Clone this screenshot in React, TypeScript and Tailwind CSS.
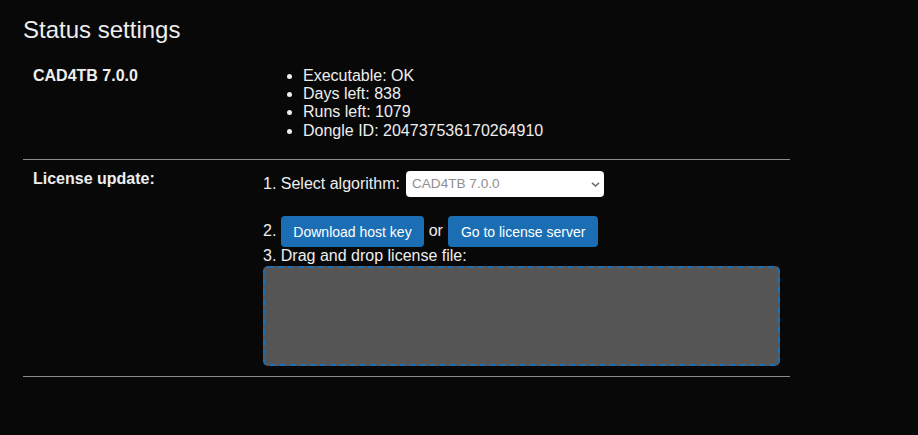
const statusItems = [
  'Executable: OK',
  'Days left: 838',
  'Runs left: 1079',
  'Dongle ID: 204737536170264910',
];

export default function App() {
  return (
    <div className="min-h-screen bg-[#080808] px-[23px] font-['Liberation_Sans',Arial,sans-serif] text-[16px] leading-[1.15] text-[#eeeeee]">
      <h1 className="pt-[16px] text-[24px] leading-[1.15]">Status settings</h1>

      <div className="w-[767px]">
        {/* status row */}
        <div className="flex border-b border-[#8c8c8c] pt-[23px] pb-[19px]">
          <div className="w-[230px] pl-[10px] font-bold">CAD4TB 7.0.0</div>
          <ul className="list-disc pl-[50px]">
            {statusItems.map((item) => (
              <li key={item}>{item}</li>
            ))}
          </ul>
        </div>

        {/* license row */}
        <div className="flex border-b border-[#8c8c8c]">
          <div className="w-[230px] pt-[10px] pl-[10px] font-bold">License update:</div>
          <div className="w-[537px] px-[10px] pt-[11px] pb-[10px]">
            <div className="flex h-[26px] items-center gap-[6px]">
              <span>1. Select algorithm:</span>
              <div className="relative">
                <select className="h-[26px] w-[198px] appearance-none rounded-[4px] bg-white pl-[6px] text-[13.6px] text-[#8f8f8f]">
                  <option>CAD4TB 7.0.0</option>
                </select>
                <svg
                  className="pointer-events-none absolute right-[4px] top-[11px] h-[5px] w-[9px]"
                  viewBox="0 0 9 5"
                  fill="none"
                >
                  <path d="M1 0.8 L4.5 4 L8 0.8" stroke="#707070" strokeWidth="1.6" />
                </svg>
              </div>
            </div>

            <div className="mt-[19px] flex h-[31px] items-center gap-[5px]">
              <span>2.</span>
              <button className="h-[31px] rounded-[4px] bg-[#1b6eb3] px-[12px] text-[14px] text-white">
                Download host key
              </button>
              <span>or</span>
              <button className="h-[31px] rounded-[4px] bg-[#1b6eb3] px-[13px] text-[14px] text-white">
                Go to license server
              </button>
            </div>

            <div>3. Drag and drop license file:</div>
            <div className="h-[100px] w-[517px] rounded-[5px] border-2 border-dashed border-[#1d6fb3] bg-[#555555]" />
          </div>
        </div>
      </div>
    </div>
  );
}
